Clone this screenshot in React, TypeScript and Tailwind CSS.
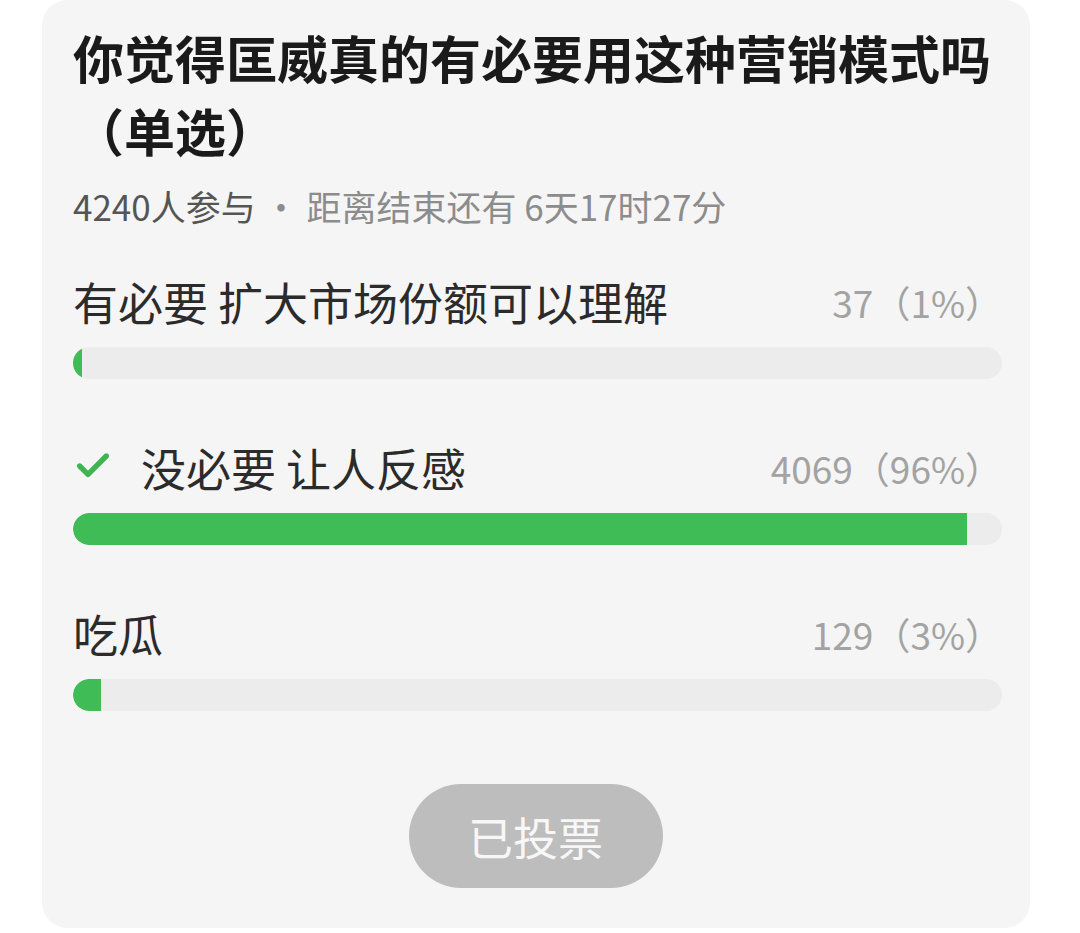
import { Check } from 'lucide-react';

type Option = {
  label: string;
  count: number;
  percent: number;
  fill: number;
  chosen?: boolean;
};

const options: Option[] = [
  { label: '有必要 扩大市场份额可以理解', count: 37, percent: 1, fill: 1 },
  { label: '没必要 让人反感', count: 4069, percent: 96, fill: 96.2, chosen: true },
  { label: '吃瓜', count: 129, percent: 3, fill: 3 },
];

const font = { fontFamily: '"Noto Sans CJK SC", "Noto Sans", sans-serif' };

function OptionRow({ option }: { option: Option }) {
  return (
    <div>
      <div className="flex items-center justify-between h-[56px]">
        <div className="flex items-center">
          {option.chosen && (
            <Check className="w-[40px] h-[40px] text-[#3fb552] mr-[28px] -mt-[4px]" strokeWidth={3.2} />
          )}
          <span className="text-[45px] text-[#2b2b2b] leading-[56px]">{option.label}</span>
        </div>
        <span className="text-[37px] text-[#a3a3a3] leading-[56px]">
          {option.count}（{option.percent}%）
        </span>
      </div>
      <div className="mt-[17px] h-[32px] w-full rounded-full bg-[#ececec] overflow-hidden">
        <div
          className="h-full rounded-l-full bg-[#3fbc55]"
          style={{ width: `${option.fill}%` }}
        />
      </div>
    </div>
  );
}

export default function App() {
  return (
    <div className="w-[1080px] h-[933px] bg-white overflow-hidden" style={font}>
      <div className="ml-[42px] w-[988px] h-[928px] rounded-[26px] bg-[#f5f5f5] pl-[31px] pr-[28px] pt-[21px]">
        {/* Title */}
        <h1 className="text-[51px] font-bold leading-[73px] text-[#1a1a1a]">
          你觉得匡威真的有必要用这种营销模式吗（单选）
        </h1>
        <p className="mt-[15px] text-[35px] leading-[48px]">
          <span className="text-[#555555]">4240人参与</span>
          <span className="text-[#8c8c8c]"> · 距离结束还有 6天17时27分</span>
        </p>

        {/* Options */}
        <div className="mt-[44px] flex flex-col gap-[61px]">
          {options.map((o) => (
            <OptionRow key={o.label} option={o} />
          ))}
        </div>

        {/* Button */}
        <div className="mt-[73px] flex justify-center pr-[4px]">
          <div className="w-[254px] h-[104px] rounded-full bg-[#bdbdbd] flex items-center justify-center">
            <span className="text-[45px] text-[#f7f7f7] leading-none">已投票</span>
          </div>
        </div>
      </div>
    </div>
  );
}
